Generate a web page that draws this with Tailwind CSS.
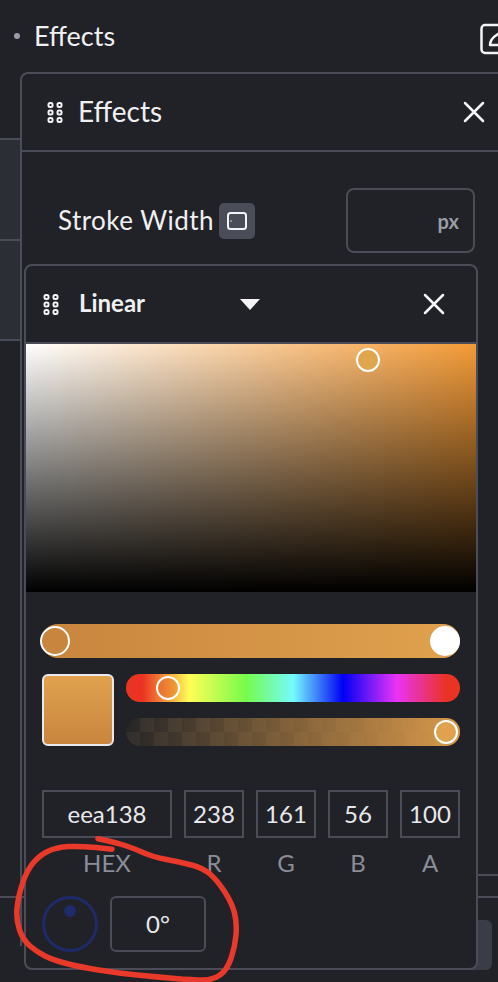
<!DOCTYPE html>
<html>
<head>
  <title>Effects</title>
  <meta charset="UTF-8">
  <meta name="viewport" content="width=device-width, initial-scale=1.0">
  <script src="https://cdn.jsdelivr.net/npm/@tailwindcss/browser@4"></script>
</head>
<body class="bg-[#212227] [font-family:Lato,sans-serif] text-[#f0f0f2] overflow-hidden">
  <div class="relative w-[498px] h-[982px] overflow-hidden">
    <!-- page behind the panels -->
    <div class="flex items-center h-[72px] pl-[14px]">
      <span class="w-[6px] h-[6px] rounded-full bg-[#9a9ea8]"></span>
      <span class="ml-[14px] mt-[1px] text-[27px]">Effects</span>
      <svg class="ml-auto mr-[-14px] mt-[6px]" width="32" height="32" viewBox="0 0 32 32" fill="none" stroke="#f4f4f6" stroke-width="2.500">
        <path d="M18 2H5a3.500 3.500 0 0 0-3.500 3.500v21A3.500 3.500 0 0 0 5 30h13"/>
        <path d="M10 22c0-4 3-8 8-11" stroke-linecap="round"/>
        <path d="M10 22h8"/>
      </svg>
    </div>
    <div class="h-[66px]"></div>
    <div class="w-[20px] h-[101px] bg-[#2b2e35] border-t-2 border-[#4a4d57]"></div>
    <div class="w-[20px] h-[102px] bg-[#2b2e35] border-y-2 border-[#4a4d57]"></div>
    <div class="h-[533px]"></div>
    <div class="ml-auto w-[22px] h-[2px] bg-[#4a4d57]"></div>
    <div class="h-[20px]"></div>
    <div class="h-[2px] bg-[#4a4d57]"></div>
    <div class="ml-auto mr-[6px] mt-[22px] w-[30px] h-[50px] rounded-md bg-[#3a3c47]"></div>

    <!-- Effects panel -->
    <div class="absolute left-[20px] top-[72px] w-[500px] h-[874px] border-2 border-b-0 border-[#4a4d57] rounded-t-lg">
      <div class="flex items-center h-[78px] pl-[25px] border-b-2 border-[#4a4d57]">
        <svg width="16" height="21" viewBox="0 0 16 21" fill="none" stroke="#f4f4f6" stroke-width="2">
          <rect x="1.500" y="1" width="4" height="4" rx="1.500"/><rect x="10.500" y="1" width="4" height="4" rx="1.500"/>
          <rect x="1.500" y="8.500" width="4" height="4" rx="1.500"/><rect x="10.500" y="8.500" width="4" height="4" rx="1.500"/>
          <rect x="1.500" y="16" width="4" height="4" rx="1.500"/><rect x="10.500" y="16" width="4" height="4" rx="1.500"/>
        </svg>
        <span class="ml-[15px] mb-[3px] text-[28px]">Effects</span>
        <svg class="ml-[301px]" width="22" height="22" viewBox="0 0 22 22" stroke="#f4f4f6" stroke-width="2.500" stroke-linecap="round"><path d="M2 2l18 18M20 2L2 20"/></svg>
      </div>
      <div class="flex items-center mt-[36px] pl-[36px]">
        <span class="text-[26px] tracking-[0.45px]">Stroke Width</span>
        <span class="ml-[5px] flex items-center justify-center w-[36px] h-[36px] rounded-[5px] bg-[#4a4d57]">
          <svg width="20" height="18" viewBox="0 0 20 18" fill="none" stroke="#f4f4f6" stroke-width="2"><rect x="1" y="1" width="18" height="16" rx="2.500"/><path d="M4 8.500v1" stroke-width="1.500"/></svg>
        </span>
        <div class="ml-[91px] flex items-center justify-end w-[129px] h-[65px] pr-[14px] border-2 border-[#4a4d57] rounded-lg">
          <span class="text-[20px] font-bold text-[#9a9ca6]">px</span>
        </div>
      </div>
    </div>

    <!-- Linear gradient panel -->
    <div class="absolute left-[24px] top-[264px] w-[454px] h-[706px] flex flex-col bg-[#212227] border-2 border-[#4a4d57] rounded-lg">
      <div class="flex items-center h-[78px] shrink-0 pl-[17px] border-b-2 border-[#4a4d57]">
        <svg width="16" height="21" viewBox="0 0 16 21" fill="none" stroke="#f4f4f6" stroke-width="2">
          <rect x="1.500" y="1" width="4" height="4" rx="1.500"/><rect x="10.500" y="1" width="4" height="4" rx="1.500"/>
          <rect x="1.500" y="8.500" width="4" height="4" rx="1.500"/><rect x="10.500" y="8.500" width="4" height="4" rx="1.500"/>
          <rect x="1.500" y="16" width="4" height="4" rx="1.500"/><rect x="10.500" y="16" width="4" height="4" rx="1.500"/>
        </svg>
        <span class="ml-[20px] mb-[3px] text-[24px] font-bold">Linear</span>
        <span class="ml-[95px] w-0 h-0 border-x-[10px] border-x-transparent border-t-[11px] border-t-[#f4f4f6]"></span>
        <svg class="ml-[163px]" width="22" height="22" viewBox="0 0 22 22" stroke="#f4f4f6" stroke-width="2.500" stroke-linecap="round"><path d="M2 2l18 18M20 2L2 20"/></svg>
      </div>

      <div class="relative h-[248px] shrink-0 [background:linear-gradient(to_top,#000,transparent),linear-gradient(to_right,#fff,#f39a36)]">
        <span class="absolute left-[330px] top-[4px] w-[24px] h-[24px] rounded-full bg-[#e0a54f] border-2 border-white"></span>
      </div>

      <div class="relative mt-[32px] ml-[15px] w-[419px] h-[34px] rounded-full bg-[linear-gradient(to_right,#c8853e,#e0a24e)]">
        <span class="absolute left-[-1px] top-[2px] w-[30px] h-[30px] rounded-full bg-[#c8853e] border-2 border-white"></span>
        <span class="absolute right-0 top-[2px] w-[30px] h-[30px] rounded-full bg-white"></span>
      </div>

      <div class="flex mt-[16px] ml-[16px]">
        <div class="w-[72px] h-[72px] rounded-md border-2 border-[#e8e8f0] bg-[linear-gradient(to_bottom,#e0a24e,#c8853e)]"></div>
        <div class="ml-[12px] w-[334px] flex flex-col gap-[16px]">
          <div class="relative h-[28px] rounded-full bg-[linear-gradient(to_right,#ea3323_5%,#fffe55_19%,#75fb4c_36%,#75fbfd_50%,#0000f5_65%,#ea33f7_81%,#ea3323_96%)]">
            <span class="absolute left-[30px] top-[2px] w-[24px] h-[24px] rounded-full bg-[linear-gradient(to_right,#ea6a2e,#eea138)] border-2 border-white"></span>
          </div>
          <div class="relative h-[28px] rounded-full [background:linear-gradient(to_right,#21222700,#d9994a),repeating-conic-gradient(#302e2d_0_25%,#262527_0_50%)_0_0/28px_28px]">
            <span class="absolute right-[2px] top-[2px] w-[24px] h-[24px] rounded-full bg-[#e0a24e] border-2 border-white"></span>
          </div>
        </div>
      </div>

      <div class="flex gap-[12px] mt-[44px] ml-[16px] text-center">
        <div class="w-[130px]">
          <div class="h-[48px] leading-[43px] border-2 border-[#4a4d57] text-[24px] text-[#e8e8ea]">eea138</div>
          <div class="mt-[11px] text-[24px] leading-[28px] text-[#8a8d98]">HEX</div>
        </div>
        <div class="w-[60px]">
          <div class="h-[48px] leading-[43px] border-2 border-[#4a4d57] text-[24px] text-[#e8e8ea]">238</div>
          <div class="mt-[11px] text-[24px] leading-[28px] text-[#8a8d98]">R</div>
        </div>
        <div class="w-[60px]">
          <div class="h-[48px] leading-[43px] border-2 border-[#4a4d57] text-[24px] text-[#e8e8ea]">161</div>
          <div class="mt-[11px] text-[24px] leading-[28px] text-[#8a8d98]">G</div>
        </div>
        <div class="w-[60px]">
          <div class="h-[48px] leading-[43px] border-2 border-[#4a4d57] text-[24px] text-[#e8e8ea]">56</div>
          <div class="mt-[11px] text-[24px] leading-[28px] text-[#8a8d98]">B</div>
        </div>
        <div class="w-[60px]">
          <div class="h-[48px] leading-[43px] border-2 border-[#4a4d57] text-[24px] text-[#e8e8ea]">100</div>
          <div class="mt-[11px] text-[24px] leading-[28px] text-[#8a8d98]">A</div>
        </div>
      </div>

      <div class="flex items-center gap-[12px] mt-[19px] ml-[16px]">
        <div class="relative w-[56px] h-[56px] rounded-full border-[3px] border-[#1f2a6b]">
          <span class="absolute left-[19px] top-[6px] w-[12px] h-[12px] rounded-full bg-[#1f2a6b]"></span>
        </div>
        <div class="w-[96px] h-[56px] leading-[51px] text-center border-2 border-[#4a4d57] rounded-md text-[24px] text-[#e8e8ea]">0°</div>
      </div>
    </div>

    <!-- red pen annotation -->
    <svg class="absolute left-0 top-0 pointer-events-none" width="498" height="982" viewBox="0 0 498 982" fill="none" stroke="#e8392a" stroke-width="5.500" stroke-linecap="round">
      <path d="M112 849.300L96 847.600Q80 846 68.500 846.600Q57 847.300 48.500 851Q40 855 33.500 862.500Q27 870 22.500 883.500Q18 897 17 908.500Q16 920 19.500 930Q23 940 30 946Q37 952 45 956Q53 960 66.500 963.500Q80 967 98.500 970Q117 973 137 975Q157 977 175 978.500Q193 980 203 980Q213 980 220 975Q227 970 231 958.500Q235 947 236 935Q237 923 234.500 913Q232 903 224.500 891.500Q217 880 210 874Q203 868 191.500 865Q180 862 166.500 859.500Q153 857 143 852.500Q133 848 125 845.500Q117 843 107.500 840.800L98 838.700"/>
    </svg>
  </div>
</body>
</html>
